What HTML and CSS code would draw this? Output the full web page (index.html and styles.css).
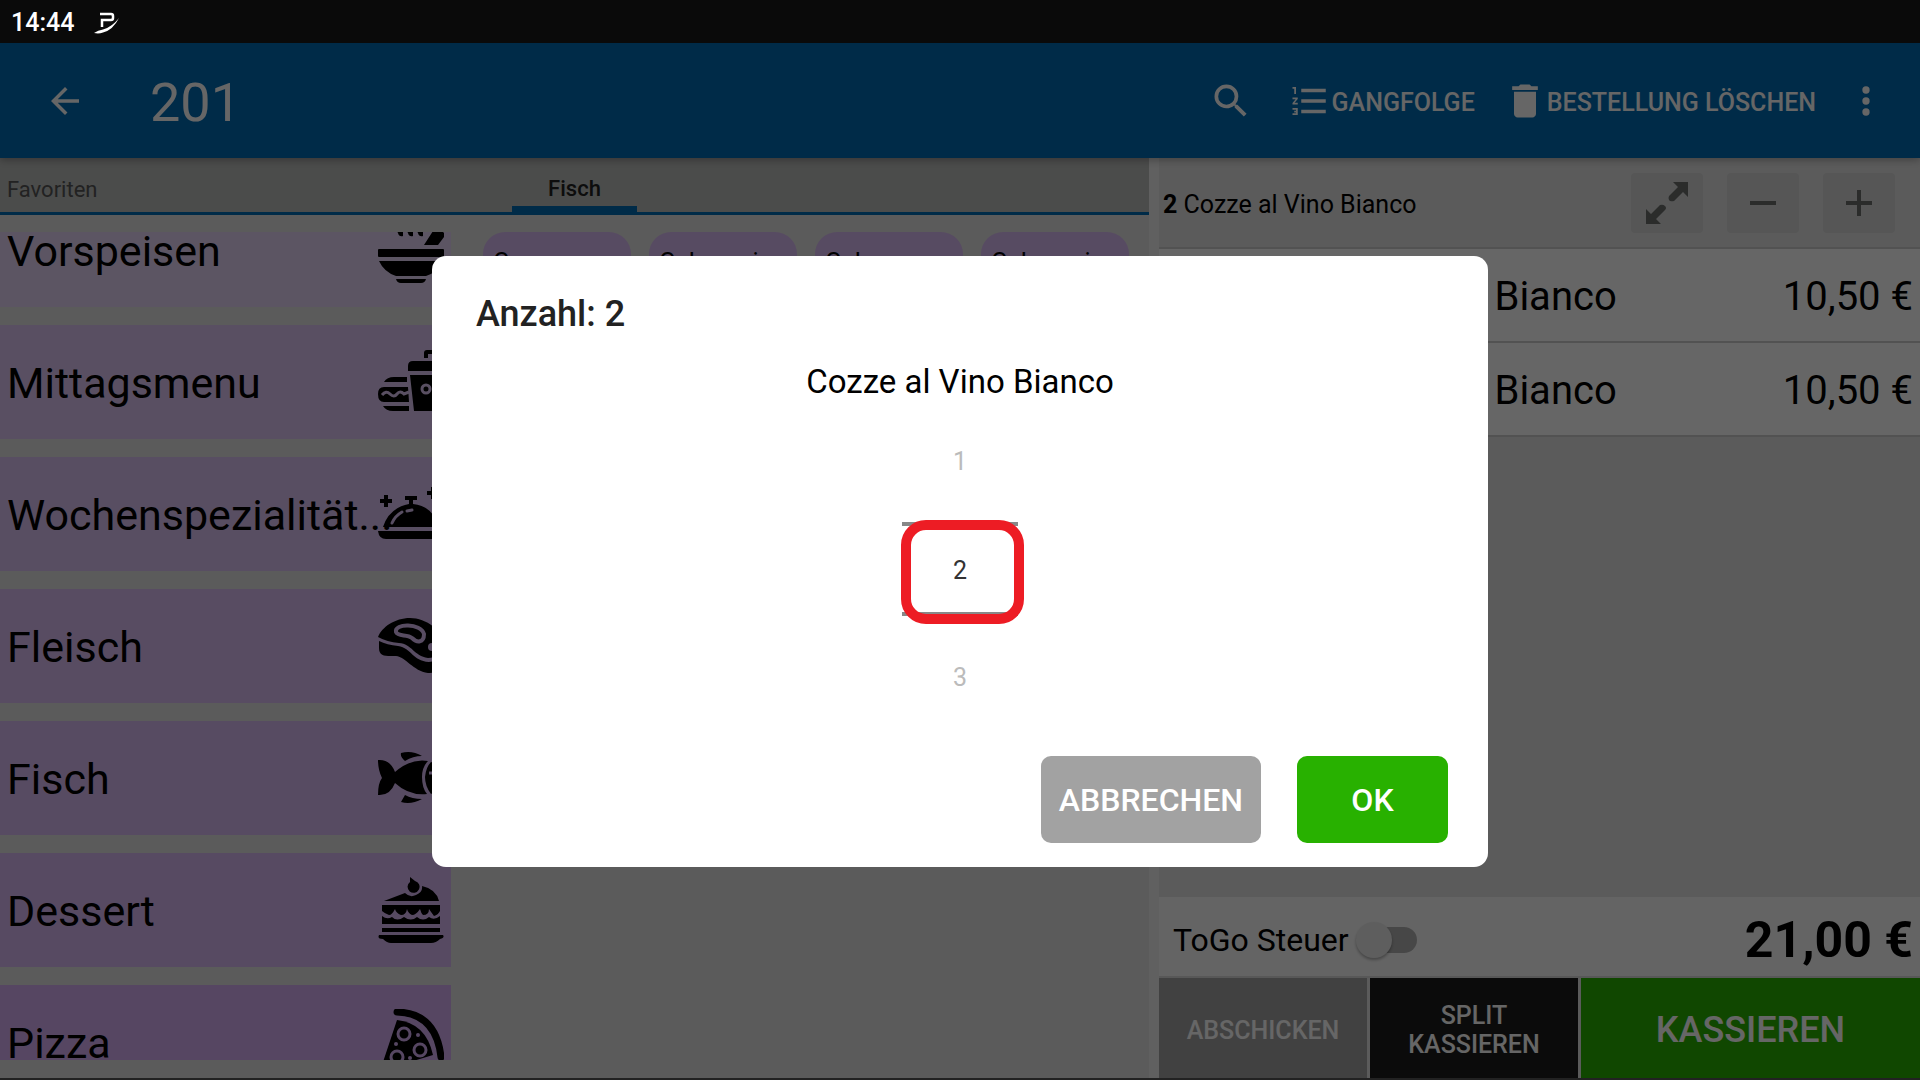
FILE: index.html
```html
<!DOCTYPE html>
<html lang="de">
<head>
  <meta charset="UTF-8">
  <meta name="viewport" content="width=device-width, initial-scale=1.0">
  <title>Tisch 201</title>
  <link rel="stylesheet" href="styles.css">
</head>
<body>
  <div class="statusbar">
    <span>14:44</span>
    <svg width="26" height="22" viewBox="0 0 26 22"><path d="M6 2H17a2 2 0 0 1 2 2V6a2 2 0 0 1-2 2H8V15" fill="none" stroke="#fff" stroke-width="2.5"/><path d="M0 21Q4 18 9 17.500Q18 15 25 6Q19 18 9 20.500Q5 22 0 21Z" fill="#fff"/></svg>
  </div>

  <header class="toolbar">
    <button class="back" aria-label="Zurück"><svg width="42" height="42" viewBox="0 0 24 24"><path d="M20 11H7.830l5.590-5.590L12 4l-8 8 8 8 1.410-1.410L7.830 13H20z"/></svg></button>
    <h1>201</h1>
    <button class="search" aria-label="Suchen"><svg width="44" height="44" viewBox="0 0 24 24"><path d="M15.500 14h-.79l-.28-.27A6.470 6.470 0 0 0 16 9.500 6.500 6.500 0 1 0 9.500 16c1.610 0 3.090-.59 4.230-1.570l.27.28v.79l5 4.990L20.490 19zm-6 0a4.500 4.500 0 1 1 0-9 4.500 4.500 0 0 1 0 9z"/></svg></button>
    <button class="course"><svg width="42" height="44" viewBox="0 0 24 24"><path d="M2 17h2v.5H3v1h1v.5H2v1h3v-4H2zm1-9h1V4H2v1h1zm-1 3h1.800L2 13.100v.9h3v-1H3.200L5 10.900V10H2zm5-6v2h14V5zm0 14h14v-2H7zm0-6h14v-2H7z"/></svg><span>GANGFOLGE</span></button>
    <button class="clear"><svg width="44" height="44" viewBox="0 0 24 24"><path d="M6 19c0 1.100.9 2 2 2h8c1.100 0 2-.9 2-2V7H6zM19 4h-3.500l-1-1h-5l-1 1H5v2h14z"/></svg><span>BESTELLUNG LÖSCHEN</span></button>
    <button class="more" aria-label="Mehr"><svg width="44" height="44" viewBox="0 0 24 24"><circle cx="12" cy="6" r="2"/><circle cx="12" cy="12" r="2"/><circle cx="12" cy="18" r="2"/></svg></button>
  </header>

  <main>
    <section class="menu">
      <nav class="tabs">
        <a href="#favoriten">Favoriten</a>
        <a href="#fisch" class="active">Fisch</a>
      </nav>
      <div class="menu-body">
        <div class="categories">
          <button class="cat c1">Vorspeisen
            <svg width="66" height="66" viewBox="0 0 66 66"><path d="M17 10l3 6q1 4 5 3v-4l-3-5zM27 10l3 6q1 4 5 3v-4l-3-5zM37 10l3 6q1 4 5 3v-4l-3-5zM55 14h9l2 2v4l-6 8H46z"/><rect y="32" width="66" height="8" rx="1"/><path d="M1 44H65Q60 55 48 59H18Q6 55 1 44zM18 62H48Q47 66 43 66H23Q19 66 18 62z"/></svg>
          </button>
          <button class="cat c2">Mittagsmenu
            <svg width="66" height="66" viewBox="0 0 66 66"><path d="M46 9V4q0-3 3-3h9v4h-8v4zM30 22V17q0-5 5-5H61q5 0 5 5v5zM32 26H64L62 62H36zM6 33Q9 28 16 28H29V33zM0 45Q0 38 6 38H30L31 53H6Q0 53 0 45zM5 57H31V62H15Q8 62 5 57z"/><path d="M4 46q4-5 8-1t7 0 7 0l5-2" fill="none" class="cut" stroke-width="3"/><circle cx="48" cy="40" r="4" class="cut" stroke-width="3"/></svg>
          </button>
          <button class="cat c3">Wochenspezialität...
            <svg width="66" height="66" viewBox="0 0 66 66"><path d="M27 15h12v4h-4v4Q55 25 61 46H5Q11 27 31 23v-4h-4zM0 50H66Q65 58 58 58H8Q1 58 0 50zM6 14h4v4h4v4h-4v4H6v-4H2v-4h4zM53 6h4v4h4v4h-4v4h-4v-4h-4v-4h4z"/><path d="M14 42Q17 35 24 31M29 30l5-1" fill="none" class="cut" stroke-width="3" stroke-linecap="round"/></svg>
          </button>
          <button class="cat c4">Fleisch
            <svg width="66" height="66" viewBox="0 0 66 66"><path d="M0 24C4 14 17 5 32 5C48 5 66 18 66 32C66 40 58 45 50 45C36 43 34 31 21 30Q9 29 0 24zM1 28Q9 32 20 33C34 35 34 48 51 49Q61 48 65 42V51Q61 61 50 60C35 58 28 44 18 43C8 43 1 44 1 35z"/><path d="M18 19C16 10 43 10 46 21C46 30 39 30 34 25C29 21 20 24 18 19z" class="cut" stroke-width="4"/><circle cx="54" cy="34" r="4" class="hole"/></svg>
          </button>
          <button class="cat c5">Fisch
            <svg width="66" height="66" viewBox="0 0 66 66"><path d="M0 15Q12 14 17 27Q33 13 50 16Q44 22 44 32Q44 43 49 49Q31 51 17 38Q12 51 0 50Q0 38 4 33Q0 25 0 15zM53 17Q61 19 66 32Q62 46 53 49Q47 41 47 32Q48 22 53 17zM23 8Q34 5 44 11Q35 11 27 16Q22 12 23 8zM27 50Q34 54 44 54Q33 60 23 57z"/><path d="M51 28h7" class="cut" stroke-width="3"/></svg>
          </button>
          <button class="cat c6">Dessert
            <svg width="66" height="66" viewBox="0 0 66 66"><path d="M32 0l5 4a6 6 0 1 1-5 1zM6 24L27 16Q32 21 38 18Q45 15 44 9Q58 12 61 24zM4 28H62V34Q60 38 56 39Q53 35 51 32Q51 38 45 38Q43 36 42 32Q38 38 34 38Q30 36 29 32Q28 38 23 38Q18 36 17 32Q14 38 11 38Q6 36 4 34zM4 39Q9 43 14 40Q19 45 26 40Q33 45 39 40Q45 45 51 40Q56 44 62 39V47H4zM4 51H62V55H4zM1 58H65Q67 61 62 62Q58 66 53 66H13Q9 66 5 62Q-1 62 1 58z"/></svg>
          </button>
          <button class="cat c7">Pizza
            <svg width="66" height="66" viewBox="0 0 66 66"><path d="M19 3Q58 4 63 48" fill="none" stroke="#000" stroke-width="7" stroke-linecap="round"/><path d="M19 11Q48 14 55 46L2 62z"/><circle cx="26" cy="25" r="6" class="cut" stroke-width="3"/><circle cx="42" cy="41" r="6" class="cut" stroke-width="3"/><circle cx="19" cy="48" r="6" class="cut" stroke-width="3"/><circle cx="40" cy="26" r="2" class="hole"/><circle cx="18" cy="35" r="2" class="hole"/><circle cx="32" cy="49" r="2" class="hole"/></svg>
          </button>
        </div>
        <div class="dishes">
          <button>Cozze</button>
          <button>Calamari</button>
          <button>Calamaro</button>
          <button>Calamari</button>
        </div>
      </div>
    </section>

    <section class="order">
      <div class="current">
        <p><b>2</b> Cozze al Vino Bianco</p>
        <button aria-label="Vergrößern"><svg width="44" height="44" viewBox="0 0 44 44"><path d="M28 1H43V16L38 11L29 20Q25 21 24 19T24 15L33 6zM1 28L6 33L15 24Q18 23 20 25T20 29L11 38L16 43H1z"/></svg></button>
        <button aria-label="Weniger"><svg width="26" height="26" viewBox="0 0 26 26"><path d="M0 11h26v4H0z"/></svg></button>
        <button aria-label="Mehr"><svg width="26" height="26" viewBox="0 0 26 26"><path d="M11 0h4v11h11v4H15v11h-4V15H0v-4h11z"/></svg></button>
      </div>
      <ul class="items">
        <li><span class="qty">1</span><span class="name">Cozze al Vino Bianco</span><span>10,50 €</span></li>
        <li><span class="qty">1</span><span class="name">Cozze al Vino Bianco</span><span>10,50 €</span></li>
      </ul>
      <div class="summary">
        <label for="togo">ToGo Steuer</label>
        <input type="checkbox" id="togo" class="switch">
        <strong>21,00 €</strong>
      </div>
      <div class="actions">
        <button class="send" disabled>ABSCHICKEN</button>
        <button class="split">SPLIT KASSIEREN</button>
        <button class="pay">KASSIEREN</button>
      </div>
    </section>
  </main>

  <div class="scrim">
    <div class="dialog" role="dialog" aria-labelledby="dialogTitle">
      <h2 id="dialogTitle">Anzahl: 2</h2>
      <p>Cozze al Vino Bianco</p>
      <div class="picker">
        <button class="prev">1</button>
        <input type="text" value="2" aria-label="Anzahl">
        <button class="next">3</button>
        <div class="marker"></div>
      </div>
      <div class="buttons">
        <button class="cancel">ABBRECHEN</button>
        <button class="ok">OK</button>
      </div>
    </div>
  </div>
</body>
</html>
```
FILE: styles.css
```css
* {
  box-sizing: border-box;
}
body {
  margin: 0;
  height: 100vh;
  display: flex;
  flex-direction: column;
  overflow: hidden;
  font-family: Roboto, "Liberation Sans", sans-serif;
  background: #e4e4e4;
  color: #000;
}
h1, h2, p, ul {
  margin: 0;
  padding: 0;
}
button {
  border: none;
  padding: 0;
  font-family: inherit;
  font-weight: 500;
  cursor: pointer;
}
svg {
  display: block;
  flex: none;
}

/* status bar stays above the scrim */
.statusbar {
  position: relative;
  z-index: 3;
  flex: none;
  height: 43px;
  padding: 2px 11px 0;
  display: flex;
  align-items: center;
  gap: 20px;
  background: #0a0a0a;
  color: #fff;
  font-size: 25px;
  font-weight: 500;
}

.toolbar {
  flex: none;
  height: 115px;
  padding: 0 32px 0 44px;
  display: flex;
  align-items: center;
  background: #006cb5;
  color: #fff;
  box-shadow: 0 2px 8px rgba(0, 0, 0, 0.3);
  z-index: 1;
}
.toolbar svg {
  fill: #fff;
}
.toolbar button {
  display: flex;
  align-items: center;
  background: none;
  color: #fff;
  font-size: 25px;
}
.toolbar span {
  padding-top: 3px;
}
.toolbar h1 {
  margin-left: 64px;
  padding-top: 3px;
  flex: 1;
  font-size: 54px;
  font-weight: 400;
}
.search {
  margin-right: 36px;
}
.course {
  margin-right: 28px;
}
.course svg {
  margin-right: 1px;
}
.more {
  margin-left: 28px;
}

main {
  flex: 1;
  min-height: 0;
  display: flex;
  border-bottom: 2px solid #555;
}
.menu {
  flex: 1;
  min-width: 0;
  display: flex;
  flex-direction: column;
}
.tabs {
  flex: none;
  height: 57px;
  display: grid;
  grid-template-columns: 1fr auto 1fr;
  background: #bcbebc;
  border-bottom: 3px solid #006cb5;
}
.tabs a {
  padding: 14px 7px 0;
  line-height: 36px;
  font-size: 22px;
  color: #555;
  text-decoration: none;
}
.tabs .active {
  padding: 14px 36px 0;
  line-height: 34px;
  color: #222;
  font-weight: 500;
  border-bottom: 6px solid #006cb5;
}
.menu-body {
  flex: 1;
  min-height: 0;
  margin: 17px 0 18px;
  display: flex;
  gap: 32px;
  overflow: hidden;
}
.categories {
  width: 451px;
  margin-top: -39px;
  display: flex;
  flex-direction: column;
  gap: 18px;
}
.cat {
  flex: none;
  height: 114px;
  padding: 2px 7px 0;
  position: relative;
  font-size: 43px;
  font-weight: 400;
  text-align: left;
  white-space: nowrap;
  color: #000;
  background: var(--tone);
}
.cat svg {
  position: absolute;
  right: 7px;
  top: 24px;
}
.cut {
  stroke: var(--tone);
}
.hole {
  fill: var(--tone);
}
.c1 { --tone: #e6d5f8; }
.c2 { --tone: #dec6f4; }
.c3 { --tone: #dcc2f4; }
.c4 { --tone: #dbbef4; }
.c5 { --tone: #dabbf4; }
.c6 { --tone: #dab9f5; }
.c7 { --tone: #d6b0f5; }

.dishes {
  flex: 1;
  padding-right: 20px;
  display: grid;
  grid-template-columns: repeat(4, 1fr);
  align-items: start;
  gap: 18px;
}
.dishes button {
  height: 148px;
  padding: 16px 10px;
  display: flex;
  border-radius: 22px;
  background: #dabbf4;
  color: #000;
  font-size: 25px;
  font-weight: 400;
}

.order {
  width: 771px;
  display: flex;
  flex-direction: column;
  border-left: 10px solid #f0f0f0;
}
.current {
  height: 91px;
  padding: 0 25px 0 4px;
  display: flex;
  align-items: center;
  gap: 24px;
  border-bottom: 2px solid #ccc;
}
.current p {
  flex: 1;
  padding-top: 3px;
  font-size: 25px;
}
.current button {
  width: 72px;
  height: 60px;
  display: flex;
  align-items: center;
  justify-content: center;
  border-radius: 4px;
  background: #d6d7d7;
}
.current svg {
  fill: #6c6e6d;
}
.items {
  flex: 1;
  list-style: none;
}
.items li {
  height: 94px;
  padding: 3px 7px 0 4px;
  display: flex;
  align-items: center;
  background: #fff;
  border-bottom: 2px solid #ccc;
  font-size: 40px;
}
.qty {
  width: 81px;
}
.name {
  flex: 1;
}
.summary {
  height: 81px;
  padding: 7px 7px 0 14px;
  display: flex;
  align-items: center;
  background: #fafafa;
  border-bottom: 2px solid #ddd;
  font-size: 32px;
}
.summary strong {
  margin-left: auto;
  font-size: 50px;
}
.switch {
  appearance: none;
  position: relative;
  width: 54px;
  height: 26px;
  margin: 0 0 0 14px;
  border-radius: 13px;
  background: #b2b2b2;
}
.switch::before {
  content: "";
  position: absolute;
  left: -7px;
  top: -5px;
  width: 36px;
  height: 36px;
  border-radius: 50%;
  background: #ececec;
  box-shadow: 0 2px 3px rgba(0, 0, 0, 0.3);
}
.actions {
  height: 100px;
  display: flex;
  gap: 3px;
}
.actions button {
  width: 208px;
  padding-top: 4px;
  color: #fff;
  font-size: 25px;
  line-height: 29px;
}
.actions .send {
  background: #a3a3a3;
}
.actions .split {
  padding: 4px 30px 0;
  background: #1c1c1c;
}
.actions .pay {
  flex: 1;
  background: #28b100;
  font-size: 36px;
}

.scrim {
  position: fixed;
  inset: 0;
  z-index: 2;
  padding-top: 43px;
  display: flex;
  align-items: center;
  justify-content: center;
  background: rgba(0, 0, 0, 0.6);
}
.dialog {
  width: 55%;
  padding: 36px 40px 24px;
  border-radius: 14px;
  background: #fff;
}
.dialog h2 {
  padding-left: 4px;
  font-size: 36px;
  line-height: 44px;
  font-weight: 500;
  color: #222;
}
.dialog p {
  margin-top: 26px;
  font-size: 33px;
  line-height: 40px;
  text-align: center;
}
.picker {
  position: relative;
  width: 116px;
  margin: 20px auto 40px;
  display: flex;
  flex-direction: column;
}
.picker button,
.picker input {
  height: 100px;
  padding: 0;
  border: none;
  background: none;
  text-align: center;
  font: 400 25px/30px Roboto, sans-serif;
  color: #bbb;
}
.picker input {
  height: 94px;
  width: 100%;
  padding-top: 2px;
  border: solid #888;
  border-width: 4px 0;
  color: #333;
}
.picker .prev {
  padding-bottom: 20px;
}
.picker .next {
  padding-top: 24px;
}
/* red frame round the chosen amount */
.marker {
  position: absolute;
  left: -1px;
  top: 98px;
  width: 123px;
  height: 104px;
  border: 10px solid #ed1c24;
  border-radius: 25px;
  pointer-events: none;
}
.buttons {
  display: flex;
  justify-content: flex-end;
  gap: 36px;
}
.buttons button {
  height: 87px;
  padding: 1px 18px 0;
  border-radius: 10px;
  color: #fff;
  font-size: 32px;
}
.buttons .cancel {
  background: #a2a2a2;
}
.buttons .ok {
  width: 151px;
  background: #28b100;
}
```
